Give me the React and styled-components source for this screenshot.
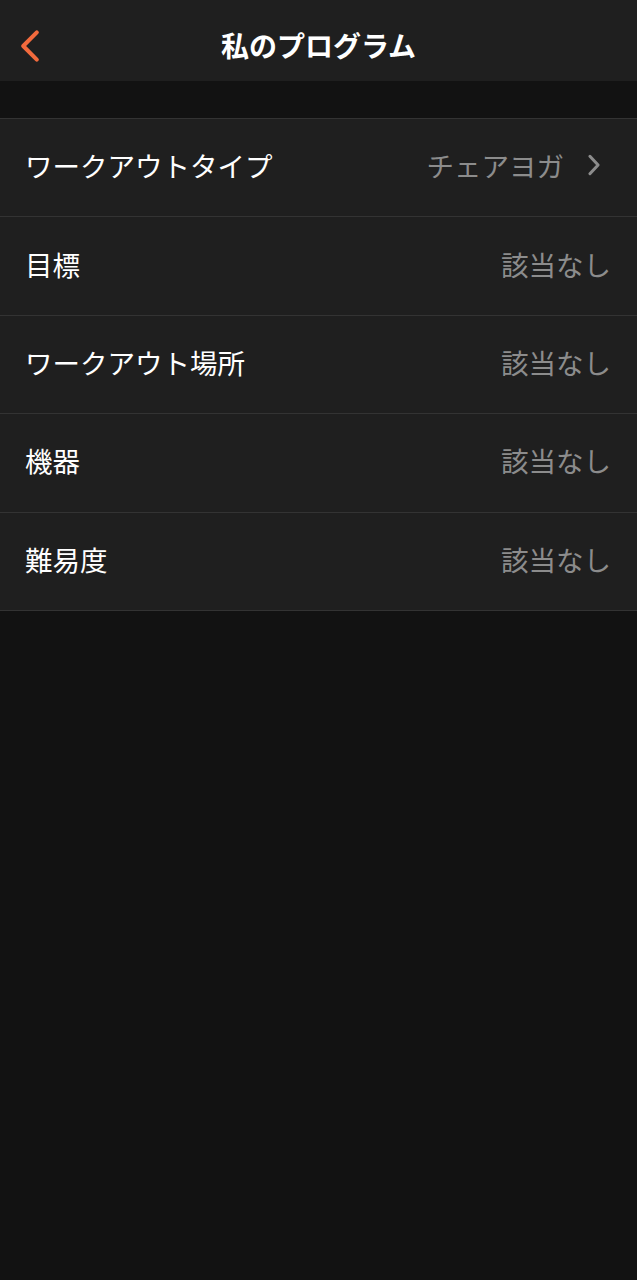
import React from "react";
import styled, { createGlobalStyle } from "styled-components";

const Global = createGlobalStyle`
  html, body { margin: 0; padding: 0; background: #121212; }
  body { font-family: "Noto Sans CJK JP", "Noto Sans", sans-serif; }
`;

const Page = styled.div`
  width: 637px;
  min-height: 1280px;
  background: #121212;
`;

const Header = styled.header`
  height: 81px;
  background: #1f1f1f;
  display: grid;
  grid-template-columns: 80px 1fr 80px;
  align-items: center;
`;

const Back = styled.div`
  display: flex;
  align-items: center;
  padding-left: 19px;
  padding-top: 10px;
`;

const Title = styled.h1`
  margin: 0;
  padding-top: 8px;
  text-align: center;
  color: #ffffff;
  font-size: 28px;
  font-weight: 700;
  line-height: 1;
`;

const Spacer = styled.div`
  height: 37px;
`;

const List = styled.div`
  border-top: 1px solid #333333;
`;

const Row = styled.div`
  height: 98.4px;
  background: #1f1f1f;
  border-bottom: 1px solid #333333;
  display: flex;
  align-items: center;
  justify-content: space-between;
  padding: 0 26px 5px 25px;
  box-sizing: border-box;
`;

const Label = styled.span`
  color: #ffffff;
  font-size: 27.5px;
  font-weight: 400;
`;

const Value = styled.span`
  display: flex;
  align-items: center;
  gap: 23px;
  color: #8c8c8c;
  font-size: 27.5px;
  font-weight: 400;
  margin-right: ${(p) => (p.$chevron ? "10px" : "0")};
`;

const rows = [
  { label: "ワークアウトタイプ", value: "チェアヨガ", chevron: true },
  { label: "目標", value: "該当なし" },
  { label: "ワークアウト場所", value: "該当なし" },
  { label: "機器", value: "該当なし" },
  { label: "難易度", value: "該当なし" },
];

const BackChevron = () => (
  <svg width="22" height="34" viewBox="0 0 12 20" fill="none">
    <path d="M10 2 L2 10 L10 18" stroke="#f26a3d" strokeWidth="2.4" strokeLinecap="round" strokeLinejoin="round" />
  </svg>
);

const RightChevron = () => (
  <svg width="14" height="24" viewBox="0 0 12 20" fill="none">
    <path d="M2.5 2.5 L9.5 10 L2.5 17.5" stroke="#8c8c8c" strokeWidth="2.6" strokeLinecap="round" strokeLinejoin="round" />
  </svg>
);

export default function App() {
  return (
    <Page>
      <Global />
      <Header>
        <Back>
          <BackChevron />
        </Back>
        <Title>私のプログラム</Title>
        <div />
      </Header>
      <Spacer />
      <List>
        {rows.map((r) => (
          <Row key={r.label}>
            <Label>{r.label}</Label>
            <Value $chevron={r.chevron}>
              {r.value}
              {r.chevron && <RightChevron />}
            </Value>
          </Row>
        ))}
      </List>
    </Page>
  );
}
